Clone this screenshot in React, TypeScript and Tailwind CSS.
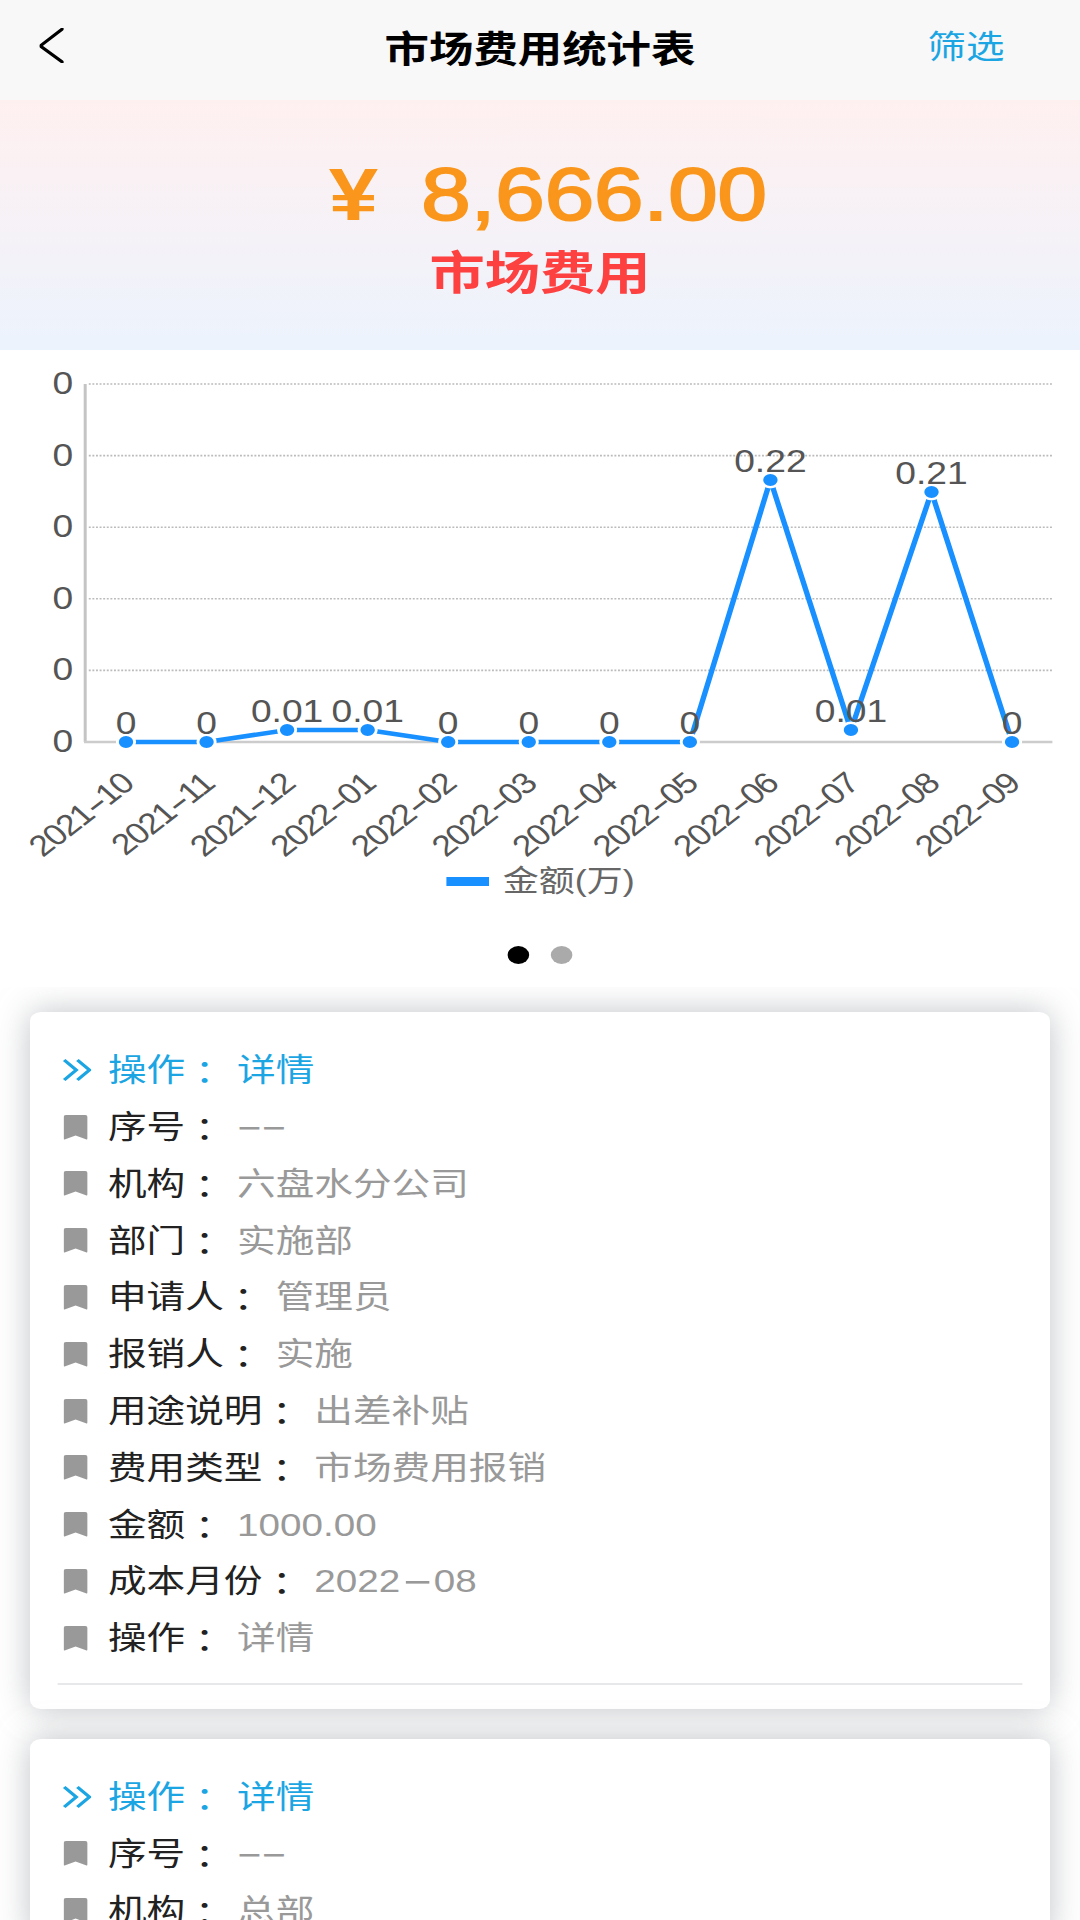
import React from "react";

const Dashes = () => (
  <span className="inline-block font-['Inter'] origin-left scale-x-[1.6] tracking-[-2px] -ml-[2px]">--</span>
);
const DateDash = () => (
  <span className="inline-block w-[28px] text-center font-['Inter'] scale-x-[1.9]">-</span>
);

type Row = { k: string; v: React.ReactNode };

const card1: Row[] = [
  { k: "序号", v: <Dashes /> },
  { k: "机构", v: "六盘水分公司" },
  { k: "部门", v: "实施部" },
  { k: "申请人", v: "管理员" },
  { k: "报销人", v: "实施" },
  { k: "用途说明", v: "出差补贴" },
  { k: "费用类型", v: "市场费用报销" },
  { k: "金额", v: "1000.00" },
  { k: "成本月份", v: <>2022<DateDash />08</> },
  { k: "操作", v: "详情" },
];
const card2: Row[] = [
  { k: "序号", v: <Dashes /> },
  { k: "机构", v: "总部" },
];

const Bookmark = () => (
  <svg viewBox="0 0 20 25" className="w-[20px] h-[25px] shrink-0 fill-[#999999]">
    <path d="M2 0h16a2 2 0 0 1 2 2v21.4a1 1 0 0 1-1.4.9L10 20.6 1.4 24.3a1 1 0 0 1-1.4-.9V2a2 2 0 0 1 2-2z" />
  </svg>
);

const Chevrons = () => (
  <svg viewBox="0 0 24 24" className="w-[24px] h-[24px] -ml-[1px] shrink-0 fill-none stroke-[#1ba5e3] stroke-[3]">
    <path d="M1.5 2 11.5 12 1.5 22" />
    <path d="M12.5 2 22.5 12 12.5 22" />
  </svg>
);

function ItemRow({ k, v, active }: { k: string; v: React.ReactNode; active?: boolean }) {
  return (
    <div className={`flex items-center h-[56.8px] text-[32.2px] ${active ? "text-[#1ba5e3]" : "text-[#222222]"}`}>
      <span className="w-[37px] flex items-center">{active ? <Chevrons /> : <Bookmark />}</span>
      <span>{k}</span>
      <span className="font-['Noto_Sans_CJK_TC'] mr-[11px]">：</span>
      <span className={active ? "text-[#1ba5e3]" : "text-[#999999]"}>{v}</span>
    </div>
  );
}

function Card({ rows, divider }: { rows: Row[]; divider?: boolean }) {
  return (
    <div className="bg-white rounded-[9px] pt-[30px] pl-[28px] pr-[23px] shadow-[0_0_30px_rgba(150,155,160,0.6)] shrink-0">
      <ItemRow k="操作" v="详情" active />
      {rows.map((r) => (
        <ItemRow key={r.k} k={r.k} v={r.v} />
      ))}
      {divider && <div className="h-[2px] bg-[#e6e8e9] mt-[16px] mb-[24px] -ml-[5px]" />}
    </div>
  );
}

const months = ["2021-10", "2021-11", "2021-12", "2022-01", "2022-02", "2022-03", "2022-04", "2022-05", "2022-06", "2022-07", "2022-08", "2022-09"];
const vals = ["0", "0", "0.01", "0.01", "0", "0", "0", "0", "0.22", "0.01", "0.21", "0"];
const ys = [392, 392, 380, 380, 392, 392, 392, 392, 130, 380, 142, 392];
const xs = months.map((_, i) => 105 + 67.125 * i);
const grid = [34, 105.6, 177.2, 248.8, 320.4, 392];

function Chart() {
  return (
    <svg viewBox="0 0 900 580" className="w-[900px] h-[580px] block">
      {grid.slice(0, 5).map((y) => (
        <line key={y} x1="74" x2="877" y1={y} y2={y} className="stroke-[#bbbbbb]" strokeWidth="1.6" strokeDasharray="1.6 1.4" />
      ))}
      <line x1="71" x2="71" y1="34" y2="392" className="stroke-[#c4c4c4]" strokeWidth="2.5" />
      <line x1="70" x2="877" y1="392" y2="392" className="stroke-[#cccccc]" strokeWidth="2.5" />
      {grid.map((y, i) => (
        <text key={i} x="61" y={y + 10} textAnchor="end" className="text-[31px] fill-[#555555]">0</text>
      ))}
      <polyline points={xs.map((x, i) => `${x},${ys[i]}`).join(" ")} fill="none" className="stroke-[#1890ff]" strokeWidth="4.5" />
      {xs.map((x, i) => (
        <circle key={i} cx={x} cy={ys[i]} r="7.2" className="fill-[#1890ff] stroke-white" strokeWidth="2.4" />
      ))}
      {xs.map((x, i) => (
        <text key={i} x={x} y={ys[i] - 8} textAnchor="middle" className="text-[31px] fill-[#555555]">{vals[i]}</text>
      ))}
      {months.map((m, i) => {
        const ax = xs[i] + 8;
        const ay = 436;
        const [a, b] = m.split("-");
        return (
          <text key={m} x={ax} y={ay} textAnchor="end" transform={`rotate(-43 ${ax} ${ay})`} className="text-[29.5px] tracking-[-1.3px] fill-[#555555]">
            {a}
            <tspan textLength="15" lengthAdjust="spacingAndGlyphs">-</tspan>
            {b}
          </text>
        );
      })}
      <rect x="372" y="527" width="35.5" height="9" className="fill-[#1890ff]" />
      <text x="419" y="541" className="text-[30px] fill-[#666666]">金额(万)</text>
    </svg>
  );
}

export default function App() {
  return (
    <div className="w-[900px] h-[1920px] origin-top-left scale-x-[1.2] flex flex-col overflow-hidden bg-white font-['Liberation_Sans','Noto_Sans_CJK_SC',sans-serif]">
      <header className="h-[100px] shrink-0 bg-[#f8f8f8] grid grid-cols-[1fr_auto_1fr]">
        <div className="pl-[33px] pt-[28px]">
          <svg viewBox="0 0 20 35" className="w-[20px] h-[35px] fill-none stroke-black stroke-[3]" strokeLinecap="round">
            <path d="M19.5 0.5 0.5 18 19.5 34.5" />
          </svg>
        </div>
        <h1 className="text-[37px] leading-[102px] font-bold text-black">市场费用统计表</h1>
        <div className="text-right pr-[63px] pt-[27px] text-[32px] leading-[40px] text-[#1ba5e3]">筛选</div>
      </header>

      <section className="h-[250px] shrink-0 bg-gradient-to-b from-[#fff0f0] to-[#ecf3fd] flex flex-col items-center pt-[59px]">
        <div className="ml-[13px] text-[74px] leading-[72px] text-[#f9961b] whitespace-pre flex">
          <span className="font-bold">¥</span>
          <span className="ml-[36px] [-webkit-text-stroke:2px_#f9961b]">8,666.00</span>
        </div>
        <div className="mt-[17px] text-[46px] leading-[50px] font-bold text-[#fd4040]">市场费用</div>
      </section>

      <section className="h-[637px] shrink-0 bg-white">
        <Chart />
        <div className="flex justify-center gap-[18px] pt-[16px]">
          <span className="w-[18px] h-[18px] rounded-full bg-black" />
          <span className="w-[18px] h-[18px] rounded-full bg-[#aaaaaa]" />
        </div>
      </section>

      <main className="flex-1 min-h-0 overflow-hidden bg-white px-[25px] pt-[25px] flex flex-col gap-[30px]">
        <Card rows={card1} divider />
        <Card rows={card2} />
      </main>
    </div>
  );
}
